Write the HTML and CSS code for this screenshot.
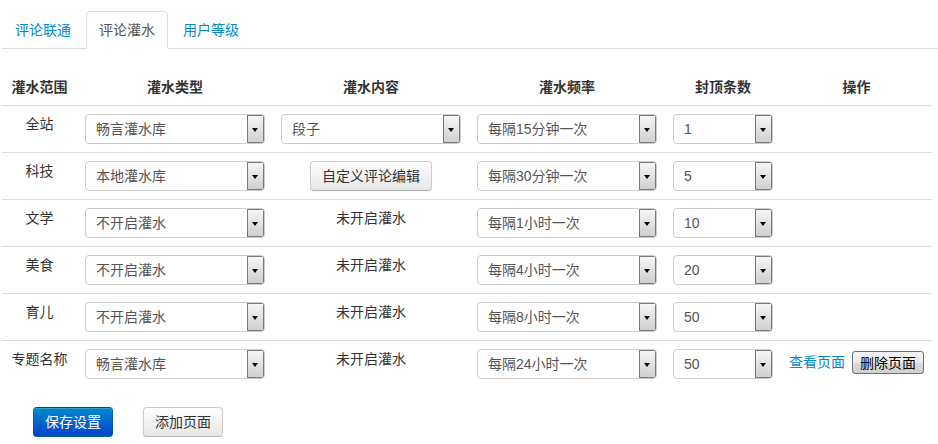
FILE: index.html
```html
<!DOCTYPE html>
<html lang="zh-CN">
<head>
<meta charset="utf-8">
<title>评论灌水</title>
<link rel="stylesheet" href="styles.css">
</head>
<body>
<div class="page">
  <ul class="tabs">
    <li class="tab"><a class="tab-link" href="#">评论联通</a></li>
    <li class="tab active"><a class="tab-link" href="#">评论灌水</a></li>
    <li class="tab"><a class="tab-link" href="#">用户等级</a></li>
  </ul>

  <table class="grid">
    <colgroup>
      <col class="c1"><col class="c2"><col class="c3"><col class="c4"><col class="c5"><col class="c6">
    </colgroup>
    <thead>
      <tr><th>灌水范围</th><th>灌水类型</th><th>灌水内容</th><th>灌水频率</th><th>封顶条数</th><th>操作</th></tr>
    </thead>
    <tbody>
      <tr>
        <td class="name">全站</td>
        <td><div class="sel w180"><span class="val">畅言灌水库</span><span class="arr"></span></div></td>
        <td><div class="sel w180"><span class="val">段子</span><span class="arr"></span></div></td>
        <td><div class="sel w180"><span class="val">每隔15分钟一次</span><span class="arr"></span></div></td>
        <td><div class="sel w100"><span class="val">1</span><span class="arr"></span></div></td>
        <td></td>
      </tr>
      <tr>
        <td class="name">科技</td>
        <td><div class="sel w180"><span class="val">本地灌水库</span><span class="arr"></span></div></td>
        <td class="center"><button class="btn">自定义评论编辑</button></td>
        <td><div class="sel w180"><span class="val">每隔30分钟一次</span><span class="arr"></span></div></td>
        <td><div class="sel w100"><span class="val">5</span><span class="arr"></span></div></td>
        <td></td>
      </tr>
      <tr>
        <td class="name">文学</td>
        <td><div class="sel w180"><span class="val">不开启灌水</span><span class="arr"></span></div></td>
        <td class="center">未开启灌水</td>
        <td><div class="sel w180"><span class="val">每隔1小时一次</span><span class="arr"></span></div></td>
        <td><div class="sel w100"><span class="val">10</span><span class="arr"></span></div></td>
        <td></td>
      </tr>
      <tr>
        <td class="name">美食</td>
        <td><div class="sel w180"><span class="val">不开启灌水</span><span class="arr"></span></div></td>
        <td class="center">未开启灌水</td>
        <td><div class="sel w180"><span class="val">每隔4小时一次</span><span class="arr"></span></div></td>
        <td><div class="sel w100"><span class="val">20</span><span class="arr"></span></div></td>
        <td></td>
      </tr>
      <tr>
        <td class="name">育儿</td>
        <td><div class="sel w180"><span class="val">不开启灌水</span><span class="arr"></span></div></td>
        <td class="center">未开启灌水</td>
        <td><div class="sel w180"><span class="val">每隔8小时一次</span><span class="arr"></span></div></td>
        <td><div class="sel w100"><span class="val">50</span><span class="arr"></span></div></td>
        <td></td>
      </tr>
      <tr>
        <td class="name">专题名称</td>
        <td><div class="sel w180"><span class="val">畅言灌水库</span><span class="arr"></span></div></td>
        <td class="center">未开启灌水</td>
        <td><div class="sel w180"><span class="val">每隔24小时一次</span><span class="arr"></span></div></td>
        <td><div class="sel w100"><span class="val">50</span><span class="arr"></span></div></td>
        <td class="ops"><a class="link" href="#">查看页面</a><button class="native-btn">删除页面</button></td>
      </tr>
    </tbody>
  </table>

  <div class="actions">
    <button class="btn btn-primary">保存设置</button>
    <button class="btn">添加页面</button>
  </div>
</div>
</body>
</html>
```

FILE: styles.css
```css
* { box-sizing: border-box; }

body {
  margin: 0;
  background: #fff;
  color: #333;
  font-family: "Liberation Sans", "Noto Sans CJK SC", sans-serif;
  font-size: 14px;
  line-height: 20px;
}

.page {
  padding: 11px 0 0 2px;
}

.tabs {
  list-style: none;
  margin: 0 0 20px 0;
  padding: 0;
  display: flex;
  border-bottom: 1px solid #ddd;
}

.tab {
  margin-bottom: -1px;
  margin-right: 2px;
}

.tab-link {
  display: block;
  padding: 8px 12px;
  line-height: 20px;
  border: 1px solid transparent;
  border-radius: 4px 4px 0 0;
  color: #0088cc;
  text-decoration: none;
}

.tab.active .tab-link {
  color: #555;
  background: #fff;
  border-color: #ddd #ddd transparent;
}

.grid {
  width: 930px;
  border-collapse: collapse;
  border-spacing: 0;
  margin-bottom: 20px;
}

.c1 { width: 76px; }
.c2, .c3, .c4 { width: 196px; }
.c5 { width: 116px; }
.c6 { width: 150px; }

.grid th,
.grid td {
  padding: 8px;
  line-height: 20px;
  vertical-align: top;
  text-align: left;
}

.grid th {
  font-weight: bold;
  text-align: center;
  white-space: nowrap;
}

.grid tbody td {
  border-top: 1px solid #ddd;
}

.grid td.name,
.grid td.center {
  text-align: center;
}

.sel {
  display: flex;
  height: 30px;
  border: 1px solid #ccc;
  border-radius: 4px;
  background: #fff;
  color: #555;
  overflow: hidden;
}

.w180 { width: 180px; }
.w100 { width: 100px; }

.val {
  flex: 1;
  padding-left: 10px;
  line-height: 28px;
  white-space: nowrap;
}

.arr {
  width: 17px;
  height: 28px;
  border: 1px solid #7a7a7a;
  background: linear-gradient(#f6f6f6, #cfcfcf);
  position: relative;
}

.arr::after {
  content: "";
  position: absolute;
  left: 4px;
  top: 12px;
  border-left: 3.5px solid transparent;
  border-right: 3.5px solid transparent;
  border-top: 4px solid #000;
}

.btn {
  display: inline-block;
  height: 30px;
  padding: 4px 11px;
  font-family: inherit;
  font-size: 14px;
  line-height: 20px;
  color: #333;
  background: linear-gradient(#ffffff, #e6e6e6);
  border: 1px solid #ccc;
  border-bottom-color: #b3b3b3;
  border-radius: 4px;
  box-shadow: inset 0 1px 0 rgba(255,255,255,.2), 0 1px 2px rgba(0,0,0,.05);
  cursor: pointer;
}

.btn-primary {
  color: #fff;
  background: linear-gradient(#0088cc, #0044cc);
  border-color: rgba(0,0,0,.1) rgba(0,0,0,.1) rgba(0,0,0,.25);
}

.ops {
  white-space: nowrap;
}

.link {
  color: #0088cc;
  text-decoration: none;
  display: inline-block;
  margin-top: 3px;
}

.native-btn {
  display: inline-block;
  vertical-align: top;
  margin-left: 7px;
  margin-top: 2px;
  height: 23px;
  width: 72px;
  padding: 0;
  font-family: inherit;
  font-size: 14px;
  line-height: 20px;
  color: #000;
  background: linear-gradient(#f2f2f2 0%, #ebebeb 50%, #dddddd 51%, #cfcfcf 100%);
  border: 1px solid #707070;
  border-radius: 3px;
}

.actions {
  display: flex;
  gap: 30px;
  padding-left: 31px;
}
```
